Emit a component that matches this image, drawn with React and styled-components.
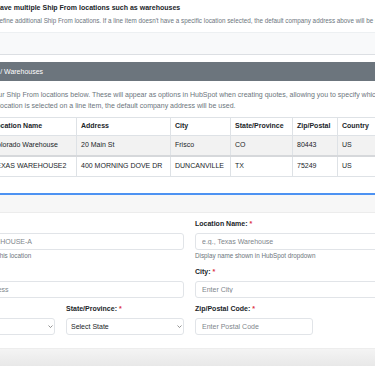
import React from 'react';
import styled, { createGlobalStyle } from 'styled-components';

const GlobalStyle = createGlobalStyle`
  html, body {
    margin: 0;
    padding: 0;
    background: #fff;
    overflow: hidden;
  }
  body {
    font-family: "Liberation Sans", Arial, sans-serif;
    font-size: 7px;
    line-height: 1.5;
    color: #212529;
  }
`;

const Page = styled.div`
  margin-left: -75px;
  width: 620px;
`;

const Intro = styled.div`
  padding: 3px 0 0 70px;
`;

const IntroTitle = styled.div`
  font-weight: 700;
  line-height: 10px;
`;

const IntroNote = styled.div`
  margin-top: 2.5px;
  font-size: 6.3px;
  line-height: 9px;
  color: #6c757d;
  white-space: nowrap;
`;

const OptionBox = styled.div`
  margin-top: 7.5px;
  height: 21px;
  background: #f8f9fa;
  border-top: 1px solid #edf0f2;
  border-bottom: 1px solid #dcdfe3;
`;

const Card = styled.section`
  margin-top: 7px;
`;

const CardHeader = styled.div`
  height: 19px;
  line-height: 19px;
  padding-left: 9px;
  background: #6c757d;
  color: #fff;
  border-radius: 3px 3px 0 0;
`;

const CardBody = styled.div`
  padding-top: 7.5px;
`;

const Lead = styled.p`
  margin: 0;
  padding-left: 73.5px;
  text-indent: -22px;
  line-height: 11px;
  color: #6c757d;
  white-space: nowrap;
`;

const Table = styled.table`
  margin: 6.5px 0 0 62px;
  border-collapse: collapse;
  table-layout: fixed;
  width: 413px;

  th, td {
    border: 1px solid #dee2e6;
    padding: 0 4px;
    text-align: left;
    vertical-align: middle;
    white-space: nowrap;
    overflow: hidden;
  }
  th {
    height: 17px;
    font-weight: 700;
  }
  td {
    height: 19px;
  }
`;

const Row = styled.tr`
  background: ${(p) => (p.$striped ? '#f2f2f2' : '#fff')};
  td {
    border-bottom: ${(p) => (p.$striped ? '2px solid #d6d8db' : '1px solid #dee2e6')};
  }
`;

const FormCard = styled.section`
  margin-top: 16px;
  border-top: 2px solid #4d92f2;
`;

const FormHeader = styled.div`
  height: 17px;
  background: #f7f7f7;
  border-bottom: 1px solid #ececec;
`;

const FormBody = styled.div`
  padding: 6px 12px 13px;
`;

const Grid = styled.div`
  display: grid;
  grid-template-columns: repeat(4, 118px);
  column-gap: 11px;
  row-gap: 6.5px;
`;

const Field = styled.div`
  grid-column: span ${(p) => p.$span || 1};
  min-width: 0;
`;

const Label = styled.label`
  display: block;
  font-weight: 700;
  line-height: 10px;
  margin-bottom: 4px;
  white-space: nowrap;
`;

const Req = styled.span`
  color: #dc3545;
`;

const Input = styled.input`
  box-sizing: border-box;
  display: block;
  width: 100%;
  height: 17px;
  margin: 0;
  padding: 0 6px;
  border: 1px solid #e1e4e8;
  border-radius: 3px;
  background: #fff;
  font-family: inherit;
  font-size: 7px;
  color: #212529;
  outline: none;

  &::placeholder {
    color: #80868c;
  }
`;

const SelectWrap = styled.div`
  position: relative;
`;

const Select = styled.select`
  box-sizing: border-box;
  display: block;
  width: 100%;
  height: 17px;
  margin: 0;
  padding: 0 10px 0 4px;
  border: 1px solid #e1e4e8;
  border-radius: 3px;
  background: #fff;
  font-family: inherit;
  font-size: 7px;
  color: #212529;
  appearance: none;
  outline: none;
`;

const Chevron = styled.svg`
  position: absolute;
  right: 2px;
  top: 7px;
  width: 5px;
  height: 3px;
  pointer-events: none;
`;

const Help = styled.div`
  margin-top: 2px;
  font-size: 6.3px;
  line-height: 8px;
  color: #6c757d;
  white-space: nowrap;
`;

const Footer = styled.div`
  height: 24px;
  background: linear-gradient(#f4f4f4, #e3e3e3);
  border-top: 1px solid #ededed;
`;

const locations = [
  ['Colorado Warehouse', '20 Main St', 'Frisco', 'CO', '80443', 'US'],
  ['TEXAS WAREHOUSE2', '400 MORNING DOVE DR', 'DUNCANVILLE', 'TX', '75249', 'US'],
];

const columns = [
  ['Location Name', 89],
  ['Address', 94],
  ['City', 60],
  ['State/Province', 62],
  ['Zip/Postal', 45],
  ['Country', 63],
];

const SelectField = ({ label, value }) => (
  <Field>
    <Label>
      {label}: <Req>*</Req>
    </Label>
    <SelectWrap>
      <Select defaultValue="">
        <option value="">{value}</option>
      </Select>
      <Chevron viewBox="0 0 5 3">
        <path d="M0.5 0.5 L2.5 2.5 L4.5 0.5" fill="none" stroke="#666" strokeWidth="0.7" />
      </Chevron>
    </SelectWrap>
  </Field>
);

export default function App() {
  return (
    <Page>
      <GlobalStyle />
      <Intro>
        <IntroTitle>Have multiple Ship From locations such as warehouses</IntroTitle>
        <IntroNote>
          Define additional Ship From locations. If a line item doesn't have a specific location selected, the
          default company address above will be used.
        </IntroNote>
      </Intro>
      <OptionBox />

      <Card>
        <CardHeader>Ship From Locations / Warehouses</CardHeader>
        <CardBody>
          <Lead>
            Add your Ship From locations below. These will appear as options in HubSpot when creating quotes,
            allowing you to specify which location each line item ships from. If no
            <br />
            location is selected on a line item, the default company address will be used.
          </Lead>
          <Table>
            <colgroup>
              {columns.map(([name, w]) => (
                <col key={name} style={{ width: w }} />
              ))}
            </colgroup>
            <thead>
              <tr>
                {columns.map(([name]) => (
                  <th key={name}>{name}</th>
                ))}
              </tr>
            </thead>
            <tbody>
              {locations.map((loc, i) => (
                <Row key={loc[0]} $striped={i === 0}>
                  {loc.map((v, j) => (
                    <td key={j}>{v}</td>
                  ))}
                </Row>
              ))}
            </tbody>
          </Table>
        </CardBody>
      </Card>

      <FormCard>
        <FormHeader />
        <FormBody>
          <Grid>
            <Field $span={2}>
              <Label>
                Location Code: <Req>*</Req>
              </Label>
              <Input placeholder="e.g., MAIN-WAREHOUSE-A" />
              <Help>A unique identifier for this location</Help>
            </Field>
            <Field $span={2}>
              <Label>
                Location Name: <Req>*</Req>
              </Label>
              <Input placeholder="e.g., Texas Warehouse" />
              <Help>Display name shown in HubSpot dropdown</Help>
            </Field>
            <Field $span={2}>
              <Label>
                Street Address: <Req>*</Req>
              </Label>
              <Input placeholder="Enter Street Address" />
            </Field>
            <Field $span={2}>
              <Label>
                City: <Req>*</Req>
              </Label>
              <Input placeholder="Enter City" />
            </Field>
            <SelectField label="Country" value="Select Country" />
            <SelectField label="State/Province" value="Select State" />
            <Field>
              <Label>
                Zip/Postal Code: <Req>*</Req>
              </Label>
              <Input placeholder="Enter Postal Code" />
            </Field>
          </Grid>
        </FormBody>
        <Footer />
      </FormCard>
    </Page>
  );
}
